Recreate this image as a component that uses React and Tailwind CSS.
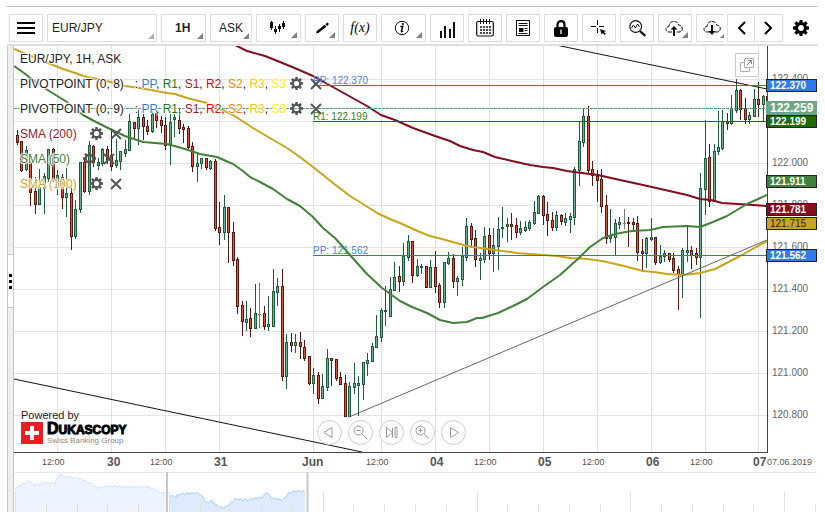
// Trading chart widget - toolbar, price chart and navigator
import { useState } from 'react';

// x, high, low, body top, body bottom, direction (g = up, r = down, n = flat)
const candles = [
  [17, 130, 145, 135, 143, 'r'], [21, 141, 172, 141, 171, 'r'], [26, 146, 171, 150, 170, 'g'],
  [30, 156, 206, 157, 193, 'r'], [35, 177, 214, 191, 205, 'r'], [39, 169, 205, 187, 205, 'g'],
  [44, 173, 214, 176, 189, 'g'], [48, 149, 182, 149, 179, 'g'], [53, 148, 182, 149, 181, 'r'],
  [57, 170, 195, 175, 188, 'g'], [62, 174, 209, 177, 198, 'r'], [66, 168, 217, 193, 198, 'g'],
  [71, 183, 250, 193, 237, 'r'], [75, 200, 239, 209, 237, 'g'], [80, 162, 213, 162, 210, 'g'],
  [84, 158, 193, 162, 192, 'r'], [89, 141, 195, 145, 192, 'g'], [93, 145, 167, 146, 163, 'r'],
  [98, 158, 170, 162, 166, 'g'], [102, 148, 166, 149, 164, 'g'], [107, 146, 164, 149, 160, 'r'],
  [111, 130, 171, 155, 167, 'r'], [116, 139, 168, 160, 166, 'g'], [120, 151, 170, 151, 162, 'g'],
  [125, 140, 157, 149, 154, 'g'], [129, 114, 151, 121, 151, 'g'], [134, 122, 138, 122, 129, 'r'],
  [138, 110, 145, 117, 129, 'g'], [143, 114, 140, 117, 127, 'r'], [147, 120, 135, 126, 132, 'r'],
  [152, 111, 133, 114, 132, 'g'], [156, 110, 128, 113, 121, 'r'], [161, 116, 133, 120, 126, 'r'],
  [165, 117, 150, 125, 146, 'r'], [170, 114, 165, 122, 146, 'g'], [174, 114, 137, 117, 120, 'g'],
  [179, 108, 134, 120, 129, 'r'], [183, 124, 143, 127, 130, 'r'], [188, 126, 151, 128, 148, 'r'],
  [192, 142, 172, 146, 167, 'r'], [197, 152, 182, 163, 167, 'g'], [201, 158, 169, 158, 164, 'g'],
  [206, 158, 170, 158, 168, 'r'], [210, 160, 170, 161, 169, 'g'], [215, 159, 231, 161, 229, 'r'],
  [219, 202, 245, 227, 233, 'r'], [224, 195, 240, 207, 233, 'g'], [228, 207, 263, 207, 233, 'r'],
  [233, 222, 266, 232, 261, 'r'], [237, 257, 314, 259, 307, 'r'], [242, 301, 336, 305, 322, 'r'],
  [246, 301, 331, 319, 323, 'g'], [250, 308, 337, 318, 329, 'r'], [255, 284, 329, 313, 329, 'g'],
  [259, 283, 328, 314, 314, 'n'], [264, 306, 330, 313, 327, 'r'], [268, 296, 331, 324, 327, 'g'],
  [273, 269, 327, 291, 327, 'g'], [277, 278, 306, 286, 293, 'g'], [282, 269, 381, 286, 377, 'r'],
  [286, 334, 389, 342, 377, 'g'], [291, 333, 352, 342, 346, 'r'], [295, 334, 353, 342, 346, 'g'],
  [300, 332, 359, 342, 347, 'r'], [304, 340, 361, 347, 359, 'r'], [309, 356, 385, 356, 384, 'r'],
  [313, 368, 394, 375, 384, 'g'], [318, 372, 404, 375, 399, 'r'], [322, 374, 399, 386, 399, 'g'],
  [327, 349, 391, 358, 388, 'g'], [331, 358, 386, 358, 361, 'r'], [336, 359, 381, 359, 379, 'r'],
  [340, 372, 385, 377, 385, 'r'], [345, 375, 417, 383, 417, 'r'], [349, 382, 417, 386, 417, 'g'],
  [354, 363, 394, 383, 388, 'g'], [358, 376, 416, 383, 386, 'g'], [363, 362, 400, 362, 385, 'g'],
  [367, 353, 376, 360, 364, 'g'], [372, 343, 362, 346, 362, 'g'], [376, 315, 348, 336, 348, 'g'],
  [381, 308, 342, 310, 338, 'g'], [385, 286, 326, 310, 312, 'g'], [390, 277, 317, 289, 317, 'g'],
  [394, 262, 291, 277, 291, 'g'], [399, 266, 292, 276, 282, 'r'], [403, 243, 286, 256, 282, 'g'],
  [408, 235, 261, 241, 258, 'g'], [412, 241, 283, 241, 276, 'r'], [417, 259, 277, 266, 276, 'g'],
  [421, 264, 274, 266, 268, 'g'], [426, 266, 288, 266, 288, 'r'], [430, 260, 288, 267, 288, 'g'],
  [435, 251, 293, 267, 287, 'r'], [439, 283, 308, 285, 303, 'r'], [444, 262, 308, 262, 303, 'g'],
  [448, 252, 265, 258, 264, 'g'], [453, 254, 288, 258, 282, 'r'], [457, 276, 296, 278, 282, 'g'],
  [462, 247, 286, 256, 280, 'g'], [466, 218, 261, 226, 258, 'g'], [471, 223, 248, 226, 240, 'r'],
  [475, 230, 267, 238, 260, 'r'], [480, 253, 280, 258, 261, 'g'], [484, 227, 263, 236, 260, 'g'],
  [489, 228, 260, 235, 254, 'r'], [493, 228, 272, 245, 254, 'g'], [498, 217, 270, 229, 247, 'g'],
  [502, 207, 238, 227, 229, 'g'], [507, 218, 242, 224, 227, 'g'], [511, 213, 240, 224, 227, 'r'],
  [516, 218, 238, 225, 233, 'r'], [520, 221, 235, 228, 233, 'g'], [525, 221, 232, 227, 231, 'g'],
  [529, 220, 231, 222, 229, 'g'], [534, 201, 225, 212, 224, 'g'], [538, 195, 214, 196, 214, 'g'],
  [543, 195, 225, 196, 216, 'r'], [547, 202, 236, 214, 221, 'r'], [552, 212, 231, 220, 228, 'r'],
  [556, 211, 231, 215, 228, 'g'], [561, 214, 225, 215, 222, 'r'], [565, 213, 226, 218, 223, 'g'],
  [570, 213, 233, 216, 220, 'g'], [574, 167, 225, 169, 218, 'g'], [579, 122, 186, 141, 171, 'g'],
  [583, 109, 147, 116, 143, 'g'], [588, 106, 174, 116, 171, 'r'], [592, 161, 186, 169, 176, 'r'],
  [597, 170, 202, 176, 181, 'r'], [601, 169, 213, 179, 207, 'r'], [606, 195, 244, 205, 239, 'r'],
  [610, 209, 243, 236, 239, 'g'], [615, 219, 255, 223, 238, 'g'], [619, 217, 229, 222, 225, 'g'],
  [624, 209, 229, 223, 223, 'n'], [628, 217, 247, 222, 224, 'r'], [633, 218, 230, 222, 225, 'r'],
  [637, 216, 261, 223, 253, 'r'], [642, 239, 272, 251, 254, 'r'], [646, 237, 268, 238, 254, 'g'],
  [651, 218, 241, 237, 240, 'g'], [655, 237, 265, 237, 263, 'r'], [660, 245, 264, 256, 263, 'g'],
  [664, 250, 262, 253, 257, 'g'], [669, 253, 262, 253, 260, 'r'], [673, 253, 273, 258, 271, 'r'],
  [678, 266, 310, 269, 275, 'r'], [682, 248, 298, 250, 275, 'g'], [687, 226, 262, 250, 253, 'g'],
  [691, 246, 269, 250, 256, 'r'], [696, 248, 265, 253, 258, 'r'], [700, 173, 318, 188, 258, 'g'],
  [705, 120, 215, 158, 190, 'g'], [709, 144, 207, 157, 202, 'r'], [714, 144, 202, 151, 202, 'g'],
  [718, 111, 155, 147, 152, 'g'], [722, 110, 150, 121, 149, 'g'], [727, 113, 130, 121, 124, 'r'],
  [731, 95, 125, 108, 124, 'g'], [736, 79, 113, 90, 111, 'g'], [740, 89, 120, 90, 110, 'r'],
  [745, 98, 124, 108, 120, 'r'], [749, 112, 124, 115, 120, 'g'], [754, 89, 117, 99, 117, 'g'],
  [758, 82, 117, 99, 105, 'r'], [763, 95, 121, 96, 105, 'g'], [767, 96, 102, 96, 102, 'r'],
];

const sma200 =
  '233,44 247,51 265,56 280,62 297,69 313,76 340,91 367,106 381,115 395,120 413,128 435,136 450,141 460,146 473,150 483,152 495,157 512,161 530,165 543,167 553,168 567,171 582,173 598,175 620,180 643,185 665,190 687,195 700,199 711,200 722,203 738,204 767,206';
const sma100 =
  '14,49 33,57 63,69 87,77 107,81 125,86 140,88 167,93 175,94 187,98 207,103 220,109 233,115 253,128 275,141 287,148 300,157 313,167 333,183 350,196 363,204 377,213 390,219 400,223 413,229 420,232 430,236 442,239 453,242 467,246 487,249 517,253 543,255 557,256 570,258 587,259 602,261 620,265 643,271 654,272 667,274 683,275 700,273 715,269 740,256 767,241';
const sma50 =
  '14,66 24,73 33,80 43,87 54,94 67,102 83,115 96,122 110,129 125,136 143,142 167,144 185,149 200,154 217,157 226,161 233,164 243,171 250,177 260,182 273,189 287,199 300,206 313,217 323,228 335,238 350,255 367,274 382,288 400,301 412,307 427,313 440,320 453,323 467,322 477,318 482,318 498,313 513,306 527,299 543,287 560,275 580,257 590,247 603,238 612,235 620,233 632,231 650,230 663,227 687,226 700,227 713,222 727,216 747,204 767,195';

const timeLabels = [
  [42, '12:00'], [107, '30'], [150, '12:00'], [214, '31'], [302, 'Jun'], [366, '12:00'], [430, '04'],
  [474, '12:00'], [538, '05'], [582, '12:00'], [646, '06'], [690, '12:00'], [753, '07'], [767, '07.06.2019'],
];

const priceLabels = ['122.400', '122.200', '122.000', '121.800', '121.600', '121.400', '121.200', '121.000', '120.800'];

const priceTags = [
  { y: 79, text: '122.370', fill: '#2f7bea', color: '#fff' },
  { y: 115, text: '122.199', fill: '#1f6a04', color: '#fff' },
  { y: 175, text: '121.911', fill: '#43803a', color: '#fff' },
  { y: 203, text: '121.781', fill: '#840d20', color: '#fff' },
  { y: 217, text: '121.715', fill: '#c9a51c', color: '#222' },
  { y: 249, text: '121.562', fill: '#2f7bea', color: '#fff' },
];

const pivotLevels = [
  ['PP', 'text-[#2f7ded]'],
  ['R1', 'text-[#1f7a10]'],
  ['S1', 'text-[#a31a1a]'],
  ['R2', 'text-[#f00000]'],
  ['S2', 'text-[#ff8000]'],
  ['R3', 'text-[#ffc800]'],
  ['S3', 'text-[#fff000]'],
];

const indicators = [
  { name: 'PIVOTPOINT (0, 8)', color: 'text-[#222]', levels: true },
  { name: 'PIVOTPOINT (0, 9)', color: 'text-[#222]', levels: true },
  { name: 'SMA (200)', color: 'text-[#8e1c30]' },
  { name: 'SMA (50)', color: 'text-[#43803a]' },
  { name: 'SMA (100)', color: 'text-[#cda822]' },
];

function Gear({ size, fill, ring = 3 }) {
  return (
    <svg width={size} height={size} viewBox="0 0 16 16" fill="none">
      {[0, 45, 90, 135].map((angle) => (
        <path key={angle} d="M6.6 0h2.8l.5 4H6.1zM6.6 16h2.8l.5-4H6.1z" fill={fill} transform={`rotate(${angle} 8 8)`} />
      ))}
      <circle cx="8" cy="8" r="4.4" stroke={fill} strokeWidth={ring} />
    </svg>
  );
}

function Corner({ light }) {
  return (
    <svg className="absolute right-[3px] bottom-[3px] pointer-events-none" width="6" height="6" viewBox="0 0 6 6">
      <path d="M6 0v6H0z" fill={light ? '#b0b0b0' : '#808080'} />
    </svg>
  );
}

function ToolButton({ label, wide, corner, children }) {
  return (
    <button
      type="button"
      aria-label={label}
      className={`relative shrink-0 h-7 border border-[#dcdcdc] bg-white flex items-center justify-center text-black ${
        wide ? 'w-[45px] pr-1' : 'w-[34px]'
      }`}
    >
      {children}
      {corner && <Corner />}
    </button>
  );
}

function ToolSelect({ label, value, className, light }) {
  const [current, setCurrent] = useState(value);
  return (
    <div className="relative shrink-0">
      <select
        aria-label={label}
        value={current}
        onChange={(e) => setCurrent(e.target.value)}
        className={`block h-7 appearance-none border border-[#dcdcdc] bg-white text-xs text-[#222] ${className}`}
      >
        <option>{value}</option>
      </select>
      <Corner light={light} />
    </div>
  );
}

function Toolbar() {
  return (
    <header className="flex border-t border-t-[#bcbcbc] border-b-2 border-b-[#dedede] pt-[7px] pb-[2px] pl-[2px]">
      <div className="flex flex-1 min-w-0 gap-1 overflow-hidden">
        <ToolButton label="Menu">
          <svg width="18" height="14" viewBox="0 0 18 14" stroke="#000" strokeWidth="2">
            <path d="M0 2h18M0 7h18M0 12h18" />
          </svg>
        </ToolButton>
        <ToolSelect label="Instrument" value="EUR/JPY" className="w-[110px] pl-1" light />
        <ToolSelect label="Period" value="1H" className="w-[45px] pl-[13px] font-bold" />
        <ToolSelect label="Side" value="ASK" className="w-[42px] pl-2" />
        <ToolButton label="Chart type" wide corner>
          <svg width="16" height="14" viewBox="0 0 16 14" stroke="#111" fill="#111">
            <path d="M2.5 0v9M6.5 5v8M10.5 3v8M14.5 0v8" strokeWidth="1" />
            <path d="M1 1h3v6H1zM5 8h3v3H5zM9 5h3v3H9zM13 2h3v4h-3z" stroke="none" />
          </svg>
        </ToolButton>
        <ToolButton label="Draw" corner>
          <svg width="14" height="12" viewBox="0 0 14 12" fill="#000">
            <path d="M1 11.5l.8-2.6L9.6 2.8l1.9 2-7.8 5.9zM10.4 2.2L12 .8c.9-.6 2.3.8 1.5 1.7l-1.3 1.6z" />
          </svg>
        </ToolButton>
        <ToolButton label="Functions">
          <span className="font-['Liberation_Serif',serif] text-sm italic leading-none pb-px">f(x)</span>
        </ToolButton>
        <ToolButton label="Info" wide corner>
          <svg width="16" height="16" viewBox="0 0 16 16" fill="none" stroke="#111">
            <circle cx="8" cy="8" r="6.7" strokeWidth="1" />
            <path d="M6.3 6.6l2.4-.3-1.3 5c0 .6.7.4 1.5-.5" strokeWidth="1.5" />
            <circle cx="9" cy="4" r="1.1" fill="#111" stroke="none" />
          </svg>
        </ToolButton>
        <ToolButton label="Volume">
          <svg className="mt-[3px]" width="17" height="16" viewBox="0 0 17 16" stroke="#111" strokeWidth="2">
            <path d="M2 9v7M6 4v12M11 7v9M15 0v16" />
          </svg>
        </ToolButton>
        <ToolButton label="Calendar">
          <svg width="18" height="18" viewBox="0 0 18 18" fill="none" stroke="#111">
            <rect x=".7" y="2.5" width="16.6" height="14.5" rx="1.5" strokeWidth="1.2" />
            <path d="M4.5 0v5M7.5 0v5M10.5 0v5M13.5 0v5" strokeWidth="1" />
            <path d="M4 8h11M4 11h11M4 14h11" strokeWidth="1.7" strokeDasharray="2 1" />
          </svg>
        </ToolButton>
        <ToolButton label="News">
          <svg width="14" height="16" viewBox="0 0 14 16" fill="none" stroke="#111">
            <rect x=".5" y=".5" width="13" height="15" />
            <path d="M2.5 3.5h9M2.5 5.5h9M8.5 8.5h3M8.5 10.5h3M2.5 13.5h9" />
            <path d="M3 8h4.5v4H3z" fill="#111" stroke="none" />
          </svg>
        </ToolButton>
        <ToolButton label="Lock">
          <svg width="14" height="17" viewBox="0 0 14 17" fill="none">
            <path d="M3.5 8V4.5C3.5 0 10.5 0 10.5 4.5V8" stroke="#000" strokeWidth="2.2" />
            <rect y="7" width="14" height="10" rx="2" fill="#000" />
            <path d="M7 9.5v4.5" stroke="#fff" strokeWidth="1.3" />
          </svg>
        </ToolButton>
        <ToolButton label="Crosshair">
          <svg width="16" height="16" viewBox="0 0 16 16" stroke="#111">
            <path d="M0 6.5h5M8 6.5h5M6.5 0v5M6.5 8v5" />
            <path d="M9 9l6 2-2 1 2 2-1.5 1-1.5-2-1.5 1.5z" fill="#111" stroke="none" />
          </svg>
        </ToolButton>
        <ToolButton label="Analyse">
          <svg width="17" height="17" viewBox="0 0 17 17" fill="none" stroke="#111">
            <circle cx="6.7" cy="6.5" r="5.9" strokeWidth="1.2" />
            <path d="M2.5 8l2-3 2 3 2-4 2 3" />
            <path d="M11 11l5.3 5" strokeWidth="2.4" />
          </svg>
        </ToolButton>
        <ToolButton label="Upload" corner>
          <svg className="mr-[2px]" width="18" height="16" viewBox="0 0 18 16" fill="none" stroke="#111">
            <path d="M7 12H4C0 12 0 6.5 4 6.5C4 0 13 0 13.5 5C18.5 5 18.5 12 14 12h-3" strokeDasharray="4 1" />
            <path d="M9 16V7" strokeWidth="2" />
            <path d="M5.5 9.5L9 6l3.5 3.5" fill="#111" stroke="none" />
          </svg>
        </ToolButton>
        <ToolButton label="Download" corner>
          <svg className="mr-[2px]" width="18" height="16" viewBox="0 0 18 16" fill="none" stroke="#111">
            <path d="M7 12H4C0 12 0 6.5 4 6.5C4 0 13 0 13.5 5C18.5 5 18.5 12 14 12h-3" strokeDasharray="4 1" />
            <path d="M9 5v8" strokeWidth="2" />
            <path d="M5.5 11L9 15l3.5-4" fill="#111" stroke="none" />
          </svg>
        </ToolButton>
      </div>
      <div className="flex shrink-0 ml-[3px]">
        <button type="button" aria-label="Scroll left" className="flex items-center justify-center h-7 w-7 border border-[#dcdcdc]">
          <svg width="9" height="14" viewBox="0 0 9 14" fill="none" stroke="#000" strokeWidth="2">
            <path d="M8 1L2 7l6 6" />
          </svg>
        </button>
        <button type="button" aria-label="Scroll right" className="flex items-center justify-center h-7 w-7 border border-l-0 border-[#dcdcdc]">
          <svg width="9" height="14" viewBox="0 0 9 14" fill="none" stroke="#000" strokeWidth="2">
            <path d="M1 1l6 6-6 6" />
          </svg>
        </button>
      </div>
      <button type="button" aria-label="Settings" className="flex shrink-0 items-center justify-center h-7 w-[34px] pl-[2px]">
        <Gear size={16} fill="#000" />
      </button>
    </header>
  );
}

function Candle({ data }) {
  const [x, high, low, top, bottom, dir] = data;
  const edge = { g: '#1d5c3c', r: '#5e170d', n: '#777' }[dir];
  const fill = { g: '#6bb08d', r: '#e0503c', n: '#777' }[dir];
  const height = Math.max(bottom - top, 1);
  return (
    <g>
      <rect x={x} y={high} width="1" height={low - high} fill={edge} />
      <rect x={x - 1} y={top} width="3" height={height} fill={edge} />
      {height > 2 && <rect x={x} y={top + 1} width="1" height={height - 2} fill={fill} />}
    </g>
  );
}

function PriceChart() {
  const columns = [57, 111, 165, 219, 313, 381, 435, 489, 543, 597, 651, 705, 758];
  return (
    <svg className="block w-full h-auto" viewBox="14 46 803 426" fontFamily="'Liberation Sans', Arial, sans-serif">
      <defs>
        <clipPath id="plot">
          <rect x="14" y="46" width="753" height="406" />
        </clipPath>
      </defs>
      <g fill="#e3e3e3">
        {columns.map((x) => (
          <rect key={x} x={x} y="46" width="1" height="406" />
        ))}
        {priceLabels.map((label, i) => (
          <rect key={label} x="14" y={79 + i * 42} width="753" height="1" />
        ))}
      </g>
      <g clipPath="url(#plot)">
        {candles.map((candle) => (
          <Candle key={candle[0]} data={candle} />
        ))}
        <g fill="none" strokeWidth="2" strokeLinejoin="round">
          <polyline points={sma200} stroke="#840d20" />
          <polyline points={sma100} stroke="#c9a51c" />
          <polyline points={sma50} stroke="#43803a" />
        </g>
        <path d="M556 45L767 89M14 379L362 452" stroke="#111" strokeWidth="1" />
        <path d="M349 417L767 240" stroke="#666" strokeWidth="1" />
        <path d="M313 85.5H767M313 255.5H767" stroke="#2f6fd6" />
        <path d="M313 121.5H767" stroke="#1f6a04" />
        <path d="M14 108.5H767" stroke="#4f9a75" strokeDasharray="3 1" />
      </g>
      <g fontSize="10">
        <text x="313" y="84" fill="#4a86e0">PP: 122.370</text>
        <text x="313" y="120" fill="#3a7a22">R1: 122.199</text>
        <text x="313" y="254" fill="#4a86e0">PP: 121.562</text>
      </g>
      <path d="M767.5 46V452.5M14 452.5H768" stroke="#444" fill="none" />
      <g fontSize="10" fill="#666">
        {priceLabels.map((label, i) => (
          <text key={label} x="772" y={82 + i * 42}>{label}</text>
        ))}
      </g>
      <g fontSize="10" fontWeight="bold">
        {priceTags.map((tag) => (
          <g key={tag.text}>
            <rect x="766.5" y={tag.y + 0.5} width="50" height="12" fill={tag.fill} stroke="#222" />
            <text x="770" y={tag.y + 10} fill={tag.color} fontWeight={tag.color === '#222' ? 'normal' : 'bold'}>
              {tag.text}
            </text>
          </g>
        ))}
        <rect x="766" y="101" width="51" height="14" fill="#6ca684" />
        <text x="770" y="112" fill="#fff" fontSize="12">122.259</text>
      </g>
      <g fill="#555">
        {timeLabels.map(([x, label]) => {
          const small = label.length > 3;
          return (
            <text key={x} x={x} y={small ? 465 : 466} fontSize={small ? 9 : 12} fontWeight={small ? 'normal' : 'bold'}>
              {label}
            </text>
          );
        })}
      </g>
    </svg>
  );
}

function Legend() {
  return (
    <div className="absolute left-[6px] top-0 pt-px text-xs text-[#222] [text-shadow:1px_0_1px_#fff,-1px_0_1px_#fff,0_1px_1px_#fff,0_-1px_1px_#fff,0_0_2px_#fff,0_0_3px_#fff]">
      <div className="flex items-center h-6">EUR/JPY, 1H, ASK</div>
      {indicators.map((item) => (
        <div key={item.name} className="flex items-center h-[25px] whitespace-pre">
          <span className={item.color}>{item.name}</span>
          {item.levels ? (
            <span className="ml-[11px] mr-1">
              {': '}
              {pivotLevels.map(([level, color], i) => (
                <span key={level}>
                  {i > 0 && ', '}
                  <span className={color}>{level}</span>
                </span>
              ))}
            </span>
          ) : (
            <span className="w-[13px]" />
          )}
          <button type="button" aria-label={`${item.name} settings`} className="mr-[7px]">
            <Gear size={13} fill="#555" ring={2.4} />
          </button>
          <button type="button" aria-label={`Remove ${item.name}`}>
            <svg width="12" height="12" viewBox="0 0 12 12" stroke="#555" strokeWidth="2">
              <path d="M1 1l10 10M11 1L1 11" />
            </svg>
          </button>
        </div>
      ))}
    </div>
  );
}

function Brand() {
  return (
    <a href="#" className="absolute left-[7px] bottom-[27px] block text-[#222]">
      <span className="block text-[11px] leading-3">Powered by</span>
      <span className="flex gap-1 mt-px">
        <svg width="22" height="22" viewBox="0 0 22 22">
          <path d="M0 0h22v22H0z" fill="#ee1c25" />
          <path d="M9 4h4v5h5v4h-5v5H9v-5H4V9h5z" fill="#fff" />
        </svg>
        <span className="flex flex-col">
          <span className="text-xs leading-[14px] font-bold text-black [-webkit-text-stroke:1px_#000]">
            <span className="text-base leading-[14px]">D</span>UKASCOPY
          </span>
          <span className="text-[8px] leading-[8px] text-[#888]">Swiss Banking Group</span>
        </span>
      </span>
    </a>
  );
}

function ChartControls() {
  const controls = [
    ['Back', <path d="M15 7.5v10l-8-5z" />],
    ['Zoom out', <><circle cx="10.5" cy="10.5" r="4.5" /><path d="M8.5 10.5h4M14 14l5 4.5" /></>],
    ['Latest', <path d="M7.5 7.5v10l6-5zM13.5 7.5v10M16 7.5h2v10h-2z" />],
    ['Zoom in', <><circle cx="10.5" cy="10.5" r="4.5" /><path d="M8.5 10.5h4M10.5 8.5v4M14 14l5 4.5" /></>],
    ['Forward', <path d="M9.5 7.5v10l8-5z" />],
  ];
  return (
    <div className="absolute bottom-[27px] left-0 right-[49px] flex justify-center gap-[6px] pointer-events-none">
      {controls.map(([label, icon]) => (
        <button key={label} type="button" aria-label={label} className="pointer-events-auto">
          <svg width="25" height="25" viewBox="0 0 25 25" fill="none" stroke="#999">
            <circle cx="12.5" cy="12.5" r="12" fill="#fff" fillOpacity=".7" stroke="#ccc" />
            {icon}
          </svg>
        </button>
      ))}
    </div>
  );
}

// adds the small ups and downs between the main navigator points
function rough(points) {
  const out = [];
  points.forEach(([x, y], i) => {
    const next = points[i + 1];
    if (!next) {
      out.push(`${x},${y}`);
      return;
    }
    for (let px = x; px < next[0]; px += 1) {
      const base = y + ((next[1] - y) * (px - x)) / (next[0] - x);
      out.push(`${px},${(base + Math.sin(px * 1.3) * 0.8 + Math.sin(px * 2.9) * 0.5).toFixed(1)}`);
    }
  });
  return out.join(' ');
}

function Navigator() {
  const before = rough([
    [15, 488], [23, 484], [29, 481], [35, 485], [43, 483], [55, 483], [59, 474], [65, 477], [78, 478],
    [90, 483], [97, 488], [110, 486], [127, 487], [147, 487], [155, 489], [160, 493], [166, 493],
  ]);
  const selected = rough([
    [169, 495], [175, 497], [180, 494], [198, 493], [204, 498], [206, 503], [212, 501], [217, 506],
    [224, 508], [231, 503], [235, 499], [247, 500], [263, 497], [267, 492], [271, 498], [283, 500],
    [289, 493], [297, 491], [305, 492],
  ]);
  const ticks = Array.from({ length: 27 }, (_, i) => Math.round(15 + i * 30.77));
  return (
    <svg className="block w-full h-auto" viewBox="14 472 803 40">
      <path d="M14 472.5H817" stroke="#e6e6e6" />
      <polygon points={`15,512 ${before} 166,512`} fill="#edf4ff" />
      <polyline points={before} fill="none" stroke="#d3e3fb" />
      <polygon points={`169,512 ${selected} 305,512`} fill="#deebfe" />
      <polyline points={selected} fill="none" stroke="#a9cdfa" />
      {ticks.map((x, i) => (
        <rect key={x} x={x} y={i % 5 === 0 ? 492 : 504} width="1" height={i % 5 === 0 ? 20 : 8} fill="#e0e0e0" />
      ))}
      <path d="M167 472v40M307.5 472v40" stroke="#c8c8c8" strokeWidth="2" />
    </svg>
  );
}

export default function App() {
  return (
    <div className="bg-white pt-[6px] pl-[7px] pr-2 font-['Liberation_Sans',Arial,sans-serif]">
      <Toolbar />
      <div className="flex">
        <div className="flex flex-col justify-center w-[7px] shrink-0 pt-1 border-x border-[#c8c8c8] bg-[#eee]">
          <button
            type="button"
            aria-label="Toggle side panel"
            className="flex flex-col items-center justify-center gap-[3px] h-[54px] border-y border-[#c8c8c8] bg-white"
          >
            <span className="block size-[3px] bg-black" />
            <span className="block size-[3px] bg-black" />
            <span className="block size-[3px] bg-black" />
          </button>
        </div>
        <main className="flex-1 min-w-0">
          <div className="relative">
            <PriceChart />
            <Legend />
            <button
              type="button"
              aria-label="Open in new window"
              className="absolute right-[58px] top-[7px] flex items-center justify-center size-6 border border-[#ccc] bg-white/70"
            >
              <svg width="14" height="14" viewBox="0 0 14 14" fill="none" stroke="#aaa">
                <path d="M4.5.5h9v9h-9zM4 4.5H.5v9h9V10" />
                <path d="M6.5 7.5l5-5M8 2.5h3.5V6" stroke="#888" />
              </svg>
            </button>
            <Brand />
            <ChartControls />
          </div>
          <Navigator />
        </main>
      </div>
    </div>
  );
}
